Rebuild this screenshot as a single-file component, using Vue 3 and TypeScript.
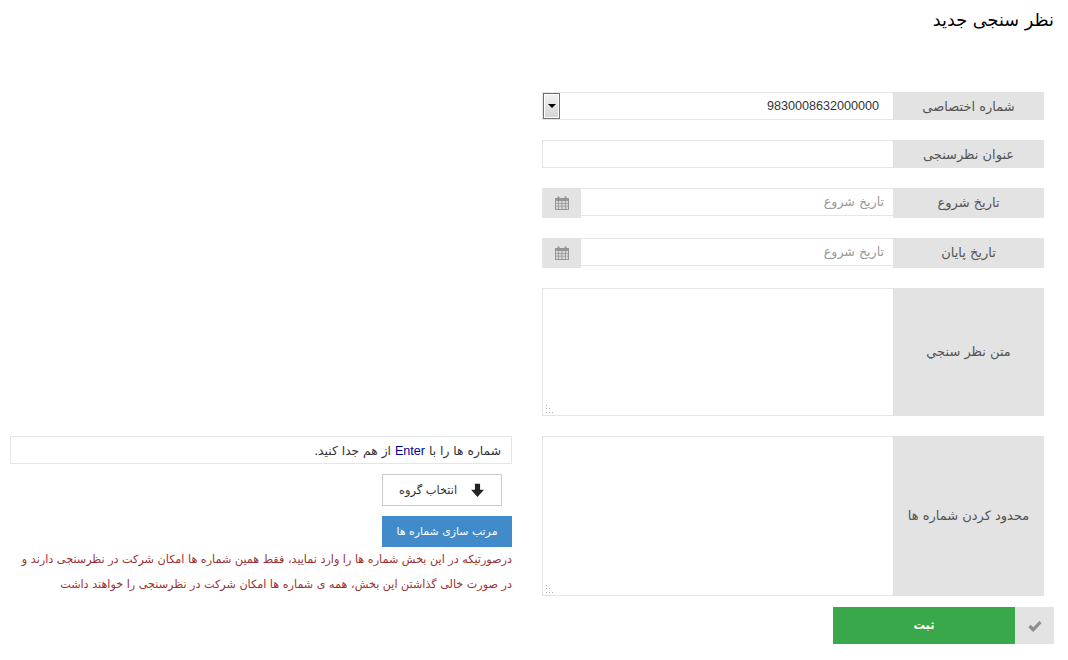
<script setup lang="ts">
const dateRows: { label: string; placeholder: string }[] = [
  { label: 'تاریخ شروع', placeholder: 'تاریخ شروع' },
  { label: 'تاریخ پایان', placeholder: 'تاریخ شروع' },
]
</script>

<template>
  <div class="page" dir="rtl">
    <h1 class="title">نظر سنجی جدید</h1>
    <form class="form" @submit.prevent>
      <div class="row h28">
        <label class="label">شماره اختصاصی</label>
        <div class="field select-field">
          <select class="select"><option>9830008632000000</option></select>
          <span class="select-btn"><i class="caret"></i></span>
        </div>
      </div>
      <div class="row h28">
        <label class="label">عنوان نظرسنجی</label>
        <input class="field input" type="text" />
      </div>
      <div v-for="d in dateRows" :key="d.label" class="row h30">
        <label class="label raised">{{ d.label }}</label>
        <input class="field input date" type="text" :placeholder="d.placeholder" />
        <span class="addon">
          <svg width="14" height="14" viewBox="0 0 14 14">
            <path fill="#959595" d="M0 2h2.5V0.5h2V2h5V0.5h2V2H14v12H0z" />
            <path fill="#d9d9d9" d="M1 5h2.2v2H1zM4 5h2.6v2H4zM7.4 5H10v2H7.4zM10.8 5H13v2h-2.2zM1 7.8h2.2v2H1zM4 7.8h2.6v2H4zM7.4 7.8H10v2H7.4zM10.8 7.8H13v2h-2.2zM1 10.6h2.2V13H1zM4 10.6h2.6V13H4zM7.4 10.6H10V13H7.4zM10.8 10.6H13V13h-2.2z" />
          </svg>
        </span>
      </div>
      <div class="row h128">
        <label class="label raised">متن نظر سنجي</label>
        <div class="area-wrap">
          <textarea class="field area"></textarea>
          <svg class="grip" width="9" height="9" viewBox="0 0 9 9"><path fill="#aaa" d="M0 0h1v1H0zM0 3h1v1H0zM0 7h1v1H0zM3 3h1v1H3zM3 7h1v1H3zM6 7h1v1H6z" /></svg>
        </div>
      </div>
      <div class="row h160">
        <label class="label raised">محدود کردن شماره ها</label>
        <div class="area-wrap">
          <textarea class="field area"></textarea>
          <svg class="grip" width="9" height="9" viewBox="0 0 9 9"><path fill="#aaa" d="M0 0h1v1H0zM0 3h1v1H0zM0 7h1v1H0zM3 3h1v1H3zM3 7h1v1H3zM6 7h1v1H6z" /></svg>
        </div>
      </div>
      <div class="side">
        <div class="hint">شماره ها را با <span class="enter">Enter</span> از هم جدا کنید.</div>
        <button class="btn group-btn" type="button">
          <svg width="15" height="15" viewBox="0 0 14 14">
            <path fill="#222" d="M4.6 0.8h4.8v5.4h3.6L7 13 1 6.2h3.6z" />
          </svg>
          <span>انتخاب گروه</span>
        </button>
        <button class="btn sort-btn" type="button">مرتب سازی شماره ها</button>
        <p class="note">درصورتیکه در این بخش شماره ها را وارد نمایید، فقط همین شماره ها امکان شرکت در نظرسنجی دارند و</p>
        <p class="note">در صورت خالی گذاشتن این بخش، همه ی شماره ها امکان شرکت در نظرسنجی را خواهند داشت</p>
      </div>
    </form>
    <div class="actions">
      <span class="check">
        <svg width="14" height="12" viewBox="0 0 14 12">
          <path fill="none" stroke="#8f8f8f" stroke-width="3.2" d="M1.5 6l3.7 3.7L12.5 2" />
        </svg>
      </span>
      <button class="submit" type="submit">ثبت</button>
    </div>
  </div>
</template>

<style scoped>
.page {
  width: 1068px;
  height: 660px;
  box-sizing: border-box;
  overflow: hidden;
  font-family: "DejaVu Sans", sans-serif;
  font-size: 12px;
  color: #333;
  background: #fff;
}
.title {
  margin: 0;
  height: 92px;
  box-sizing: border-box;
  padding: 8px 14px 0 0;
  font-size: 17.7px;
  font-weight: 400;
  line-height: 24px;
  color: #000;
}
.form {
  display: grid;
  grid-template-columns: 502px 502px;
  column-gap: 30px;
  row-gap: 20px;
  padding-right: 24px;
}
.row {
  grid-column: 1;
  display: flex;
  align-items: flex-start;
}
.h28 { height: 28px; }
.h30 { height: 30px; }
.h128 { height: 128px; }
.h160 { height: 160px; }
.label {
  flex: 0 0 151px;
  align-self: stretch;
  display: flex;
  align-items: center;
  justify-content: center;
  background: #e3e3e3;
  color: #555;
  font-size: 13px;
}
.raised { padding-bottom: 2px; box-sizing: border-box; }
.field {
  box-sizing: border-box;
  border: 1px solid #e5e5e5;
  border-right: 0;
  background: #fff;
  font: inherit;
  color: #333;
  outline: none;
  margin: 0;
  border-radius: 0;
}
.input {
  flex: 1;
  min-width: 0;
  height: 28px;
  padding: 0 9px 2px;
  font-size: 12.6px;
}
.input::placeholder { color: #999; opacity: 1; }
.date {
  border-right: 1px solid #e5e5e5;
  border-left: 0;
  margin-right: -1px;
}
.addon {
  flex: 0 0 39px;
  align-self: stretch;
  display: flex;
  align-items: center;
  justify-content: center;
  background: #e3e3e3;
}
.select-field {
  position: relative;
  flex: 1;
  height: 28px;
}
.select {
  width: 100%;
  height: 26px;
  appearance: none;
  border: 0;
  background: transparent;
  font-family: "Liberation Sans", sans-serif;
  font-size: 12.6px;
  color: #333;
  padding: 0 14px 0 0;
  outline: none;
}
.select-btn {
  position: absolute;
  left: 0;
  top: 0;
  box-sizing: border-box;
  width: 17px;
  height: 26px;
  border: 1px solid #707070;
  background: linear-gradient(#f2f2f2, #d4d4d4);
  box-shadow: inset 0 0 0 1px #fff;
  display: flex;
  align-items: center;
  justify-content: center;
  pointer-events: none;
}
.caret {
  width: 0;
  height: 0;
  border-left: 4px solid transparent;
  border-right: 4px solid transparent;
  border-top: 4px solid #000;
}
.area-wrap {
  position: relative;
  flex: 1;
  min-width: 0;
  height: 100%;
}
.area {
  display: block;
  width: 100%;
  height: 100%;
  padding: 6px 10px;
  resize: none;
}
.grip {
  position: absolute;
  left: 4px;
  bottom: 2px;
  pointer-events: none;
}
.side {
  grid-column: 2;
  grid-row: 6;
  display: flex;
  flex-direction: column;
  align-items: flex-start;
}
.hint {
  box-sizing: border-box;
  width: 100%;
  height: 28px;
  border: 1px solid #e5e5e5;
  padding: 0 10px;
  line-height: 28px;
  font-size: 12.3px;
}
.enter {
  color: #0000a0;
  font-family: "Liberation Sans", sans-serif;
  font-size: 12.6px;
}
.btn {
  box-sizing: border-box;
  font: inherit;
  cursor: pointer;
  border-radius: 0;
}
.group-btn {
  width: 120px;
  height: 32px;
  margin: 10px 10px 0 0;
  border: 1px solid #ccc;
  background: #fff;
  color: #333;
  font-size: 11.4px;
  display: flex;
  align-items: center;
  justify-content: center;
  gap: 13px;
}
.sort-btn {
  width: 130px;
  height: 31px;
  margin-top: 10px;
  border: 0;
  background: #428bca;
  color: #fff;
  font-size: 10.9px;
}
.note {
  margin: 0;
  height: 25px;
  line-height: 25px;
  color: #9c3030;
  font-size: 11.2px;
  white-space: nowrap;
}
.note:last-child { height: 24px; }
.actions {
  display: flex;
  height: 37px;
  margin-top: 11px;
  padding-right: 14px;
}
.check {
  flex: 0 0 39px;
  display: flex;
  align-items: center;
  justify-content: center;
  background: #e3e3e3;
}
.submit {
  width: 182px;
  border: 0;
  padding: 0 0 2px;
  background: #38a84a;
  color: #fff;
  font: inherit;
  font-size: 11.5px;
  font-weight: 700;
}
</style>
